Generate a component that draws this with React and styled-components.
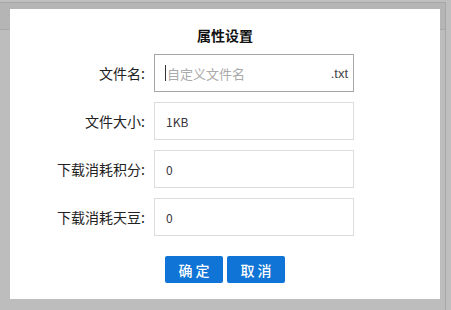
import React from "react";
import styled, { createGlobalStyle } from "styled-components";

const GlobalStyle = createGlobalStyle`
  html, body {
    margin: 0;
    padding: 0;
    background: #bebebe;
    overflow: hidden;
  }
  body {
    font-family: "Noto Sans CJK SC", "Noto Sans", sans-serif;
  }
`;

const Screen = styled.div`
  width: 451px;
  height: 310px;
  padding-top: 2px;
  box-sizing: border-box;
  background: #bfbfbf;
  overflow: hidden;
`;

const Frame = styled.div`
  width: 446px;
  height: 330px;
  box-sizing: border-box;
  border-top: 1px solid #a7a7a7;
  border-right: 1px solid #a7a7a7;
  padding: 6px 5px 0 10px;
  background: linear-gradient(
    to bottom,
    #b5b5b5 0,
    #b5b5b5 26px,
    #a9a9a9 26px,
    #a9a9a9 27px,
    #bdbdbd 27px
  );
`;

const Dialog = styled.div`
  width: 430px;
  height: 290px;
  box-sizing: border-box;
  background: #fff;
  padding: 18px 0 16px;
  display: flex;
  flex-direction: column;
  align-items: center;
`;

const Title = styled.h3`
  margin: 0 0 11px;
  font-size: 14px;
  line-height: 16px;
  font-weight: bold;
  color: #111;
`;

const Form = styled.div`
  display: grid;
  grid-template-columns: 135px 200px;
  column-gap: 9px;
  row-gap: 10px;
  align-items: center;
  align-self: flex-start;
`;

const Label = styled.label`
  justify-self: end;
  font-size: 14px;
  color: #222;
  white-space: nowrap;
`;

const Field = styled.div`
  height: 38px;
  box-sizing: border-box;
  border: 1px solid ${(p) => (p.$active ? "#a6a6a6" : "#dcdcdc")};
  display: flex;
  align-items: center;
  padding: 0 5px 0 10px;
`;

const Caret = styled.span`
  width: 1px;
  height: 16px;
  background: #333;
`;

const Input = styled.input`
  flex: 1;
  min-width: 0;
  border: none;
  outline: none;
  padding: 0 0 0 1px;
  font-family: "Noto Sans CJK SC", "Noto Sans", sans-serif;
  font-size: 12px;
  color: #3a3440;
  background: transparent;
  &::placeholder {
    color: #aaa;
    font-size: 13px;
  }
`;

const Suffix = styled.span`
  font-family: "Liberation Sans", sans-serif;
  font-size: 13px;
  color: #444;
`;

const Buttons = styled.div`
  display: flex;
  gap: 4px;
  margin-top: 20px;
`;

const Button = styled.button`
  width: 58px;
  height: 27px;
  border: none;
  border-radius: 2px;
  background: #0f74d5;
  color: #fff;
  font-family: "Noto Sans CJK SC", "Noto Sans", sans-serif;
  font-size: 14px;
  font-weight: 500;
  letter-spacing: 3px;
  padding: 0 0 0 3px;
  cursor: pointer;
`;

const fields = [
  { label: "文件大小:", value: "1KB" },
  { label: "下载消耗积分:", value: "0" },
  { label: "下载消耗天豆:", value: "0" },
];

export default function App() {
  return (
    <>
      <GlobalStyle />
      <Screen>
        <Frame>
          <Dialog>
            <Title>属性设置</Title>
            <Form>
              <Label>文件名:</Label>
              <Field $active>
                <Caret />
                <Input placeholder="自定义文件名" />
                <Suffix>.txt</Suffix>
              </Field>
              {fields.map((f) => (
                <React.Fragment key={f.label}>
                  <Label>{f.label}</Label>
                  <Field>
                    <Input defaultValue={f.value} />
                  </Field>
                </React.Fragment>
              ))}
            </Form>
            <Buttons>
              <Button>确定</Button>
              <Button>取消</Button>
            </Buttons>
          </Dialog>
        </Frame>
      </Screen>
    </>
  );
}
